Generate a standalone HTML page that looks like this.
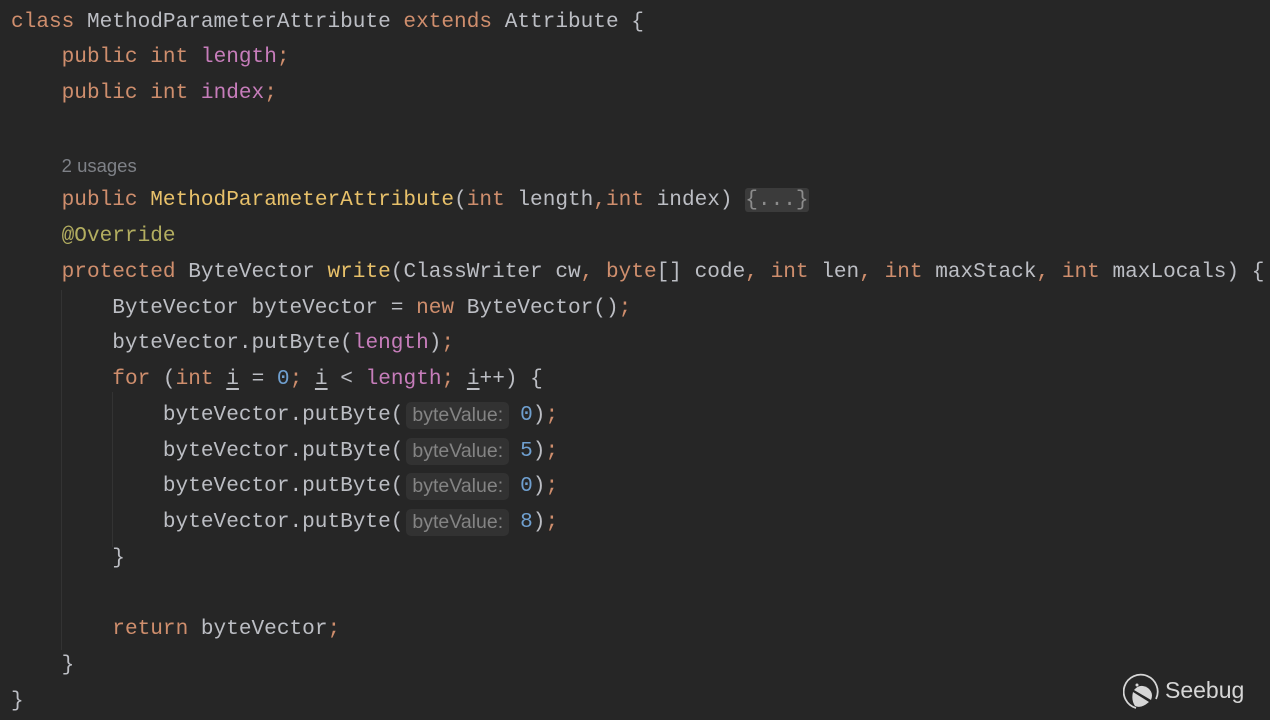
<!DOCTYPE html>
<html><head><meta charset="utf-8"><style>
html,body{margin:0;padding:0;background:#262626;width:1270px;height:720px;overflow:hidden}
.code{position:absolute;left:11px;top:4.5px;font-family:"Liberation Mono",monospace;font-size:21.1px;line-height:35.75px;color:#bcbec4;white-space:pre}
.l{display:block;height:35.75px}
.k{color:#cf8e6d}.f{color:#c77dbb}.m{color:#e8c16a}.n{color:#6f9fcf}.a{color:#b3ae60}
.g{font-family:"Liberation Sans",sans-serif;font-size:18.5px;color:#7e8187}
.h{display:inline-block;height:27px;line-height:27px;vertical-align:top;margin-top:4px;font-family:"Liberation Sans",sans-serif;font-size:19.5px;color:#848484;background:#323232;border-radius:5px;padding:0 6px;margin-left:3px;margin-right:11px}
.fold{background:#3b3b3b;color:#8c8c8c;border-radius:3px}
u{text-decoration:underline;text-underline-offset:4px}
.guide{position:absolute;width:1px;background:#333}
.logo{position:absolute;left:1123px;top:673px;color:#d6d6d6;font-family:"Liberation Sans",sans-serif;font-size:23px}
</style></head><body>
<div class="guide" style="left:112px;top:392px;height:155px"></div>
<div class="guide" style="left:61px;top:290px;height:360px"></div>
<div class="code"><span class="l"><span class="k">class</span> MethodParameterAttribute <span class="k">extends</span> Attribute {</span><span class="l">    <span class="k">public int</span> <span class="f">length</span><span class="k">;</span></span><span class="l">    <span class="k">public int</span> <span class="f">index</span><span class="k">;</span></span><span class="l"> </span><span class="l">    <span class="g">2 usages</span></span><span class="l">    <span class="k">public</span> <span class="m">MethodParameterAttribute</span>(<span class="k">int</span> length<span class="k">,int</span> index) <span class="fold">{...}</span></span><span class="l">    <span class="a">@Override</span></span><span class="l">    <span class="k">protected</span> ByteVector <span class="m">write</span>(ClassWriter cw<span class="k">,</span> <span class="k">byte</span>[] code<span class="k">,</span> <span class="k">int</span> len<span class="k">,</span> <span class="k">int</span> maxStack<span class="k">,</span> <span class="k">int</span> maxLocals) {</span><span class="l">        ByteVector byteVector = <span class="k">new</span> ByteVector()<span class="k">;</span></span><span class="l">        byteVector.putByte(<span class="f">length</span>)<span class="k">;</span></span><span class="l">        <span class="k">for</span> (<span class="k">int</span> <u>i</u> = <span class="n">0</span><span class="k">;</span> <u>i</u> &lt; <span class="f">length</span><span class="k">;</span> <u>i</u>++) {</span><span class="l">            byteVector.putByte(<span class="h">byteValue:</span><span class="n">0</span>)<span class="k">;</span></span><span class="l">            byteVector.putByte(<span class="h">byteValue:</span><span class="n">5</span>)<span class="k">;</span></span><span class="l">            byteVector.putByte(<span class="h">byteValue:</span><span class="n">0</span>)<span class="k">;</span></span><span class="l">            byteVector.putByte(<span class="h">byteValue:</span><span class="n">8</span>)<span class="k">;</span></span><span class="l">        }</span><span class="l"> </span><span class="l">        <span class="k">return</span> byteVector<span class="k">;</span></span><span class="l">    }</span><span class="l">}</span></div>
<div class="logo">
<svg width="38" height="38" viewBox="0 0 38 38" style="position:absolute;left:0;top:0">
<path d="M13 35 A17 17 0 1 1 33 26" fill="none" stroke="#d6d6d6" stroke-width="1.8"/>
<path d="M11 17 Q17 10 25 15 Q31 20 28 27 Z" fill="#d6d6d6"/>
<path d="M10 19 L26 29 Q18 36 12 33 Q8 27 10 19 Z" fill="#d6d6d6"/>
<circle cx="14" cy="12" r="1.5" fill="#d6d6d6"/>
</svg>
<span style="position:absolute;left:42px;top:4px">Seebug</span>
</div>
</body></html>
